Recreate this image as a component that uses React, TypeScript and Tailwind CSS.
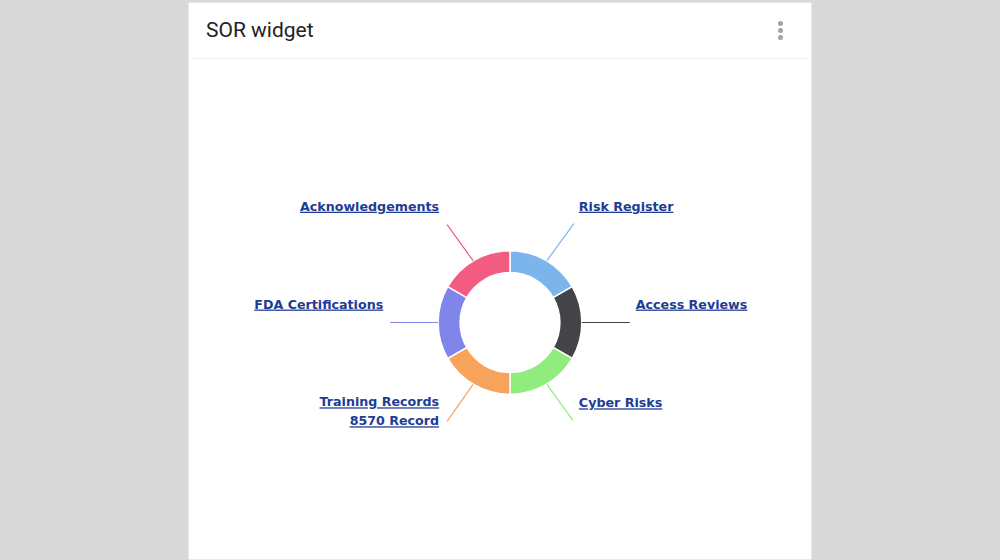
const CX = 510
const CY = 323
const R_OUT = 72
const R_IN = 50

const slices = [
  { label: ['Risk Register'], color: '#7cb5ec', line: [547, 261, 574, 224], anchor: 'start', x: 579, y: 211 },
  { label: ['Access Reviews'], color: '#434348', line: [582, 323, 630, 323], anchor: 'start', x: 636, y: 309 },
  { label: ['Cyber Risks'], color: '#90ed7d', line: [547, 385, 573, 421], anchor: 'start', x: 579, y: 408 },
  { label: ['Training Records', '8570 Record'], color: '#f7a35c', line: [473, 385, 447, 422], anchor: 'end', x: 439, y: 407 },
  { label: ['FDA Certifications'], color: '#8085e9', line: [438, 323, 390, 323], anchor: 'end', x: 383, y: 309 },
  { label: ['Acknowledgements'], color: '#f15c80', line: [473, 261, 447, 225], anchor: 'end', x: 439, y: 211 },
] as const

const pt = (r: number, deg: number) => {
  const a = (deg * Math.PI) / 180
  return `${(CX + r * Math.sin(a)).toFixed(2)} ${(CY - r * Math.cos(a)).toFixed(2)}`
}

const arc = (a0: number, a1: number) =>
  `M ${pt(R_OUT, a0)} A ${R_OUT} ${R_OUT} 0 0 1 ${pt(R_OUT, a1)} L ${pt(R_IN, a1)} A ${R_IN} ${R_IN} 0 0 0 ${pt(R_IN, a0)} Z`

const DonutChart = () => (
  <svg viewBox="189 59 622 501" className="block w-full h-[501px]">
    {slices.map((s, i) => {
      const [x1, y1, x2, y2] = s.line
      return (
        <g key={s.label[0]}>
          <path d={arc(i * 60, (i + 1) * 60)} fill={s.color} stroke="#ffffff" strokeWidth={1.5} />
          <line x1={x1} y1={y1} x2={x2} y2={y2} stroke={s.color} strokeWidth={1.2} />
          <text
            x={s.x}
            y={s.y}
            textAnchor={s.anchor}
            fill="#1f3c94"
            fontSize={12.7}
            fontWeight={700}
            fontFamily="'DejaVu Sans', Verdana, sans-serif"
            textDecoration="underline"
            className="cursor-pointer"
          >
            {s.label.map((t, j) => (
              <tspan key={t} x={s.x} dy={j === 0 ? 0 : 19}>
                {t}
              </tspan>
            ))}
          </text>
        </g>
      )
    })}
  </svg>
)

export default function App() {
  return (
    <div className="w-full h-[560px] bg-[#d9d9d9] flex justify-center pt-[2px] overflow-hidden font-['Roboto',sans-serif]">
      <div className="w-[624px] bg-white border border-[#e8e8e8] flex flex-col">
        <div className="h-[56px] flex items-center justify-between pl-[16px] pr-[23px] border-b border-[#f0f0f0] mx-[1px]">
          <h2 className="text-[21px] text-[#222222] leading-none">SOR widget</h2>
          <button className="flex flex-col gap-[2px] p-1">
            <span className="w-[5px] h-[5px] rounded-full bg-[#a3a3a3]" />
            <span className="w-[5px] h-[5px] rounded-full bg-[#a3a3a3]" />
            <span className="w-[5px] h-[5px] rounded-full bg-[#a3a3a3]" />
          </button>
        </div>
        <DonutChart />
      </div>
    </div>
  )
}
